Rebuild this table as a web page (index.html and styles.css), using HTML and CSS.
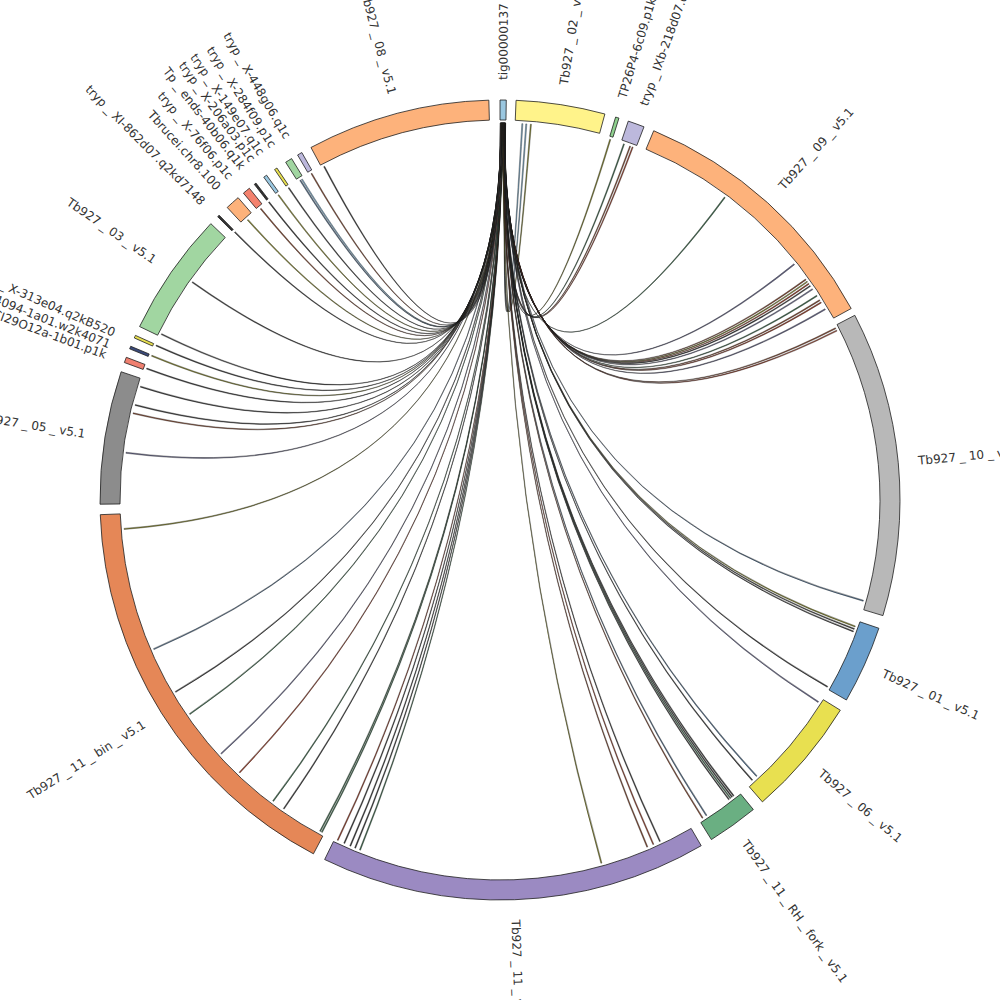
FILE: index.html
```html
<!DOCTYPE html>
<html>
<head>
<meta charset="utf-8">
<title>Circos plot</title>
<link rel="stylesheet" href="styles.css">
</head>
<body>
<svg id="plot" class="plot" width="1000" height="1000" viewBox="0 0 1000 1000" xmlns="http://www.w3.org/2000/svg"></svg>
<script src="script.js"></script>
</body>
</html>
```

FILE: styles.css
```css
html, body {
  margin: 0;
  padding: 0;
  background: #ffffff;
}
.plot {
  display: block;
  width: 1000px;
  height: 1000px;
  overflow: hidden;
}
.seg {
  stroke: #1e1e1e;
  stroke-width: 0.8;
}
.link {
  stroke: #1a1a1a;
  stroke-width: 0.4;
  stroke-linejoin: round;
}
.lbl {
  font-family: "DejaVu Sans", "Liberation Sans", sans-serif;
  font-size: 12px;
  fill: #333333;
  dominant-baseline: central;
}
```

FILE: script.js
```js
(function () {
  var NS = 'http://www.w3.org/2000/svg';
  var svg = document.getElementById('plot');
  var CX = 500, CY = 500, R1 = 380, R2 = 400, RL = 377, LR = 420;

  function pt(a, r) {
    var t = a * Math.PI / 180;
    return (CX + r * Math.sin(t)).toFixed(2) + ',' + (CY - r * Math.cos(t)).toFixed(2);
  }
  function el(tag, attrs, parent) {
    var e = document.createElementNS(NS, tag);
    for (var k in attrs) e.setAttribute(k, attrs[k]);
    (parent || svg).appendChild(e);
    return e;
  }

  var segs = [
    ['tig00000137', 0, 0.9, '#9ac7e0', 0.45],
    ['Tb927_02_v5.1', 2.3, 15.2, '#fff38a'],
    ['TP26P4-6c09.p1k', 16.8, 17.3, '#8fd18f', 16.9],
    ['tryp_IXb-218d07.q1k', 18.7, 21.1, '#bcb8dc', 20.0],
    ['Tb927_09_v5.1', 22.6, 61.4, '#fdb27b'],
    ['Tb927_10_v5.1', 62.5, 106.8, '#b8b8b8'],
    ['Tb927_01_v5.1', 108.7, 120.0, '#6b9fcc'],
    ['Tb927_06_v5.1', 121.7, 139.0, '#e8e050'],
    ['Tb927_11_RH_fork_v5.1', 140.7, 148.1, '#6aaf82'],
    ['Tb927_11_v5.1', 149.8, 206.0, '#9b8ac2'],
    ['Tb927_11_bin_v5.1', 207.8, 267.9, '#e58757'],
    ['Tb927_05_v5.1', 269.4, 288.7, '#8c8c8c'],
    ['RPCI29O12a-1b01.p1k', 290.1, 290.9, '#f08070', 290.2],
    ['tbru4094-1a01.w2k4071', 292.2, 292.6, '#3a4a7a', 291.7],
    ['tryp_X-313e04.q2kB520', 293.9, 294.3, '#e8e050', 293.4],
    ['Tb927_03_v5.1', 295.7, 313.7, '#a1d6a1'],
    ['tryp_XI-862d07.q2kd7148', 315.1, 315.4, '#333333', 315.0],
    ['Tbrucei.chr8.100', 317.0, 319.1, '#fdb27b', 317.9],
    ['tryp_X-76f06.p1c', 320.1, 321.2, '#f4826e', 320.1],
    ['Tp_ends-40b06.q1k', 322.1, 322.4, '#333333', 322.2],
    ['tryp_X-206a03.p1c', 323.8, 324.3, '#9ac7e0', 323.9],
    ['tryp_X-149e07.q1c', 325.7, 326.1, '#e8e050', 325.4],
    ['tryp_X-284f09.p1c', 327.6, 328.6, '#a1d6a1', 327.3],
    ['tryp_X-448g06.q1c', 329.6, 330.3, '#bcb8dc', 329.6],
    ['Tb927_08_v5.1', 331.8, 358.4, '#fdb27b']
  ];

  var cols = {
    ol: '#8a8a2e', gr: '#3f6f4f', br: '#8a4a30', rb: '#a0402a',
    bg: '#4f6f8f', pu: '#6a6a90', lb: '#7fb0d0', dk: '#3a3a3a'
  };
  var links = [
    [3.4, 'lb'], [4.0, 'lb'], [4.7, 'ol'], [17.0, 'ol'], [19.2, 'gr'], [20.2, 'br'], [20.6, 'rb'],
    [36.6, 'gr'], [51.3, 'pu'], [54.2, 'br'], [54.6, 'ol'], [55.0, 'rb'], [55.4, 'dk'], [56.0, 'pu'],
    [57.2, 'gr'], [58.0, 'br'], [58.4, 'rb'], [59.6, 'pu'], [62.9, 'br'], [63.3, 'rb'],
    [105.5, 'bg'], [109.6, 'ol'], [110.0, 'dk'], [110.4, 'dk'], [119.7, 'dk'], [122.4, 'pu'],
    [137.1, 'bg'], [138.0, 'dk'], [141.7, 'dk'], [142.0, 'dk'], [142.3, 'gr'], [142.6, 'dk'],
    [146.8, 'bg'], [147.5, 'br'], [154.9, 'dk'], [156.0, 'rb'], [157.0, 'br'], [164.4, 'ol'],
    [201.8, 'gr'], [202.6, 'dk'], [203.4, 'dk'], [204.4, 'dk'], [205.5, 'rb'], [208.2, 'gr'], [208.5, 'gr'],
    [215.0, 'dk'], [217.0, 'gr'], [223.7, 'rb'], [227.7, 'pu'], [235.4, 'gr'], [239.4, 'dk'], [246.7, 'bg'],
    [265.6, 'ol'], [277.2, 'pu'], [283.3, 'br'], [284.6, 'dk'], [287.5, 'dk'],
    [290.4, 'dk'], [292.5, 'ol'], [294.2, 'dk'], [296.1, 'dk'], [305.3, 'dk'],
    [315.3, 'dk'], [318.0, 'ol'], [320.6, 'br'], [322.2, 'dk'], [324.0, 'ol'], [325.9, 'dk'],
    [328.0, 'bg'], [328.3, 'lb'], [330.0, 'br'], [332.2, 'dk']
  ];

  var gLinks = el('g', { 'class': 'links' });
  var gSegs = el('g', { 'class': 'segs' });
  var gLbl = el('g', { 'class': 'labels' });

  var n = links.length;
  links.forEach(function (l, i) {
    var s = 0.82 - 0.74 * i / (n - 1);
    var ws = 0.08, wt = 0.16, t = l[0];
    var d = 'M' + pt(s - ws / 2, RL) +
      'A' + RL + ',' + RL + ' 0 0 1 ' + pt(s + ws / 2, RL) +
      'Q' + CX + ',' + CY + ' ' + pt(t - wt / 2, RL) +
      'A' + RL + ',' + RL + ' 0 0 1 ' + pt(t + wt / 2, RL) +
      'Q' + CX + ',' + CY + ' ' + pt(s - ws / 2, RL) + 'Z';
    el('path', { 'class': 'link', fill: cols[l[1]], d: d }, gLinks);
  });

  segs.forEach(function (s) {
    var name = s[0], a1 = s[1], a2 = s[2], fill = s[3];
    var lg = (a2 - a1) > 180 ? 1 : 0;
    var d = 'M' + pt(a1, R2) + 'A' + R2 + ',' + R2 + ' 0 ' + lg + ' 1 ' + pt(a2, R2) +
      'L' + pt(a2, R1) + 'A' + R1 + ',' + R1 + ' 0 ' + lg + ' 0 ' + pt(a1, R1) + 'Z';
    el('path', { 'class': 'seg', fill: fill, d: d }, gSegs);

    var ang = (s.length > 4) ? s[4] : (a1 + a2) / 2;
    var right = ang < 185;
    var rot = right ? ang - 90 : ang + 90;
    var text = el('text', {
      'class': 'lbl', x: 0, y: 0,
      transform: 'translate(' + pt(ang, LR) + ') rotate(' + rot.toFixed(2) + ')',
      'text-anchor': right ? 'start' : 'end'
    }, gLbl);
    name.split('_').forEach(function (p, i) {
      if (i > 0) {
        var u = el('tspan', { dx: 3.5 }, text);
        u.textContent = '_';
        var v = el('tspan', { dx: 3.5 }, text);
        v.textContent = p;
      } else {
        var w = el('tspan', {}, text);
        w.textContent = p;
      }
    });
  });
})();
```
